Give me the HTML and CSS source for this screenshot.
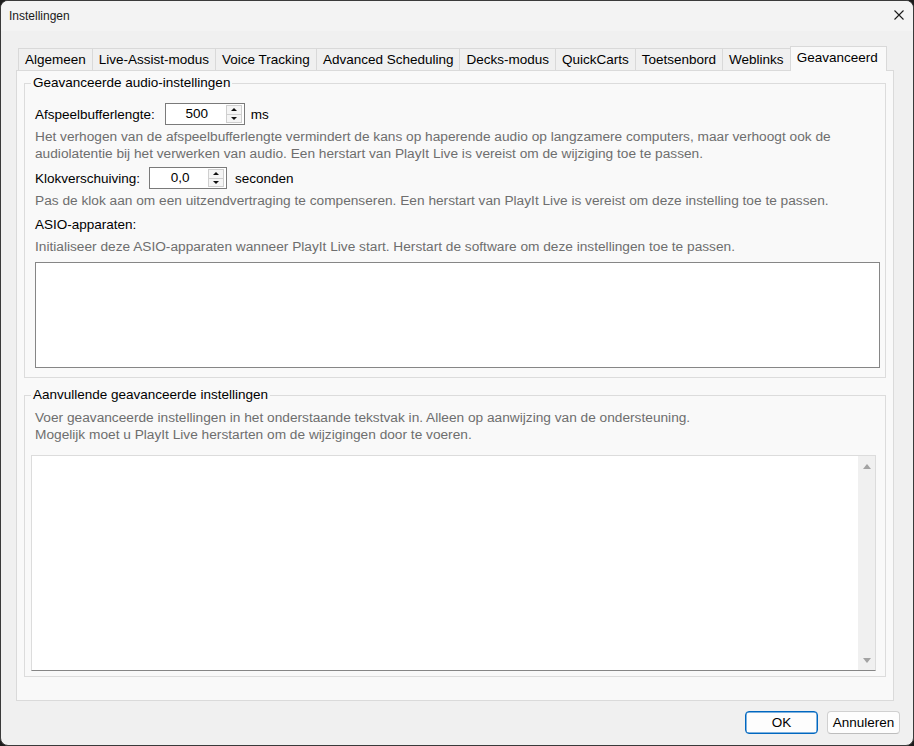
FILE: index.html
```html
<!DOCTYPE html>
<html lang="nl">
<head>
  <meta charset="UTF-8" />
  <title>Instellingen</title>
  <link rel="stylesheet" href="styles.css">
</head>
<body>
  <div class="window">
    <div class="titlebar">
      <span class="title">Instellingen</span>
      <svg class="close" width="10" height="10" viewBox="0 0 10 10">
        <path d="M0.5 0.5L9.5 9.5M9.5 0.5L0.5 9.5" stroke="#1b1b1b" stroke-width="1.1" fill="none"/>
      </svg>
    </div>

    <div class="content">
      <div class="tabs">
        <div class="tab">Algemeen</div>
        <div class="tab">Live-Assist-modus</div>
        <div class="tab">Voice Tracking</div>
        <div class="tab">Advanced Scheduling</div>
        <div class="tab">Decks-modus</div>
        <div class="tab">QuickCarts</div>
        <div class="tab">Toetsenbord</div>
        <div class="tab">Weblinks</div>
        <div class="tab active">Geavanceerd</div>
      </div>

      <div class="page">
        <fieldset class="group group-audio">
          <legend>Geavanceerde audio-instellingen</legend>

          <div class="field-row row-buffer">
            <span class="field-label label-buffer">Afspeelbufferlengte:</span>
            <div class="spin spin-buffer">
              <span class="spin-value">500</span>
              <span class="spin-buttons"><span class="spin-up"></span><span class="spin-down"></span></span>
            </div>
            <span class="unit">ms</span>
          </div>
          <p class="hint hint-buffer">Het verhogen van de afspeelbufferlengte vermindert de kans op haperende audio op langzamere computers, maar verhoogt ook de<br>audiolatentie bij het verwerken van audio. Een herstart van PlayIt Live is vereist om de wijziging toe te passen.</p>

          <div class="field-row row-clock">
            <span class="field-label label-clock">Klokverschuiving:</span>
            <div class="spin spin-clock">
              <span class="spin-value">0,0</span>
              <span class="spin-buttons"><span class="spin-up"></span><span class="spin-down"></span></span>
            </div>
            <span class="unit">seconden</span>
          </div>
          <p class="hint hint-clock">Pas de klok aan om een uitzendvertraging te compenseren. Een herstart van PlayIt Live is vereist om deze instelling toe te passen.</p>

          <p class="field-label label-asio">ASIO-apparaten:</p>
          <p class="hint hint-asio">Initialiseer deze ASIO-apparaten wanneer PlayIt Live start. Herstart de software om deze instellingen toe te passen.</p>
          <div class="listbox"></div>
        </fieldset>

        <fieldset class="group group-extra">
          <legend>Aanvullende geavanceerde instellingen</legend>
          <p class="hint hint-extra">Voer geavanceerde instellingen in het onderstaande tekstvak in. Alleen op aanwijzing van de ondersteuning.<br>Mogelijk moet u PlayIt Live herstarten om de wijzigingen door te voeren.</p>
          <div class="textbox">
            <div class="textbox-area"></div>
            <div class="scrollbar">
              <span class="arrow-up"></span>
              <span class="arrow-down"></span>
            </div>
          </div>
        </fieldset>
      </div>

      <div class="buttons">
        <button class="btn btn-default">OK</button>
        <button class="btn">Annuleren</button>
      </div>
    </div>
  </div>
</body>
</html>
```

FILE: styles.css
```css
html, body {
  margin: 0;
  padding: 0;
  background: #1c1c1c;
}
body {
  font-family: 'Liberation Sans', Arial, sans-serif;
  font-size: 13px;
  color: #000;
}
.window {
  width: 914px;
  height: 746px;
  box-sizing: border-box;
  border: 1px solid #3a3a3a;
  border-radius: 8px;
  background: #f0f0f0;
  overflow: hidden;
  display: flex;
  flex-direction: column;
}
.titlebar {
  height: 30px;
  background: #f3f3f3;
  display: flex;
  align-items: center;
  justify-content: space-between;
  padding: 0 9px 0 8px;
  flex-shrink: 0;
}
.title {
  font-size: 12px;
  color: #1a1a1a;
  margin-top: -1px;
}
.close {
  display: block;
  margin-top: -2px;
}
.content {
  flex: 1;
  display: flex;
  flex-direction: column;
}

/* tabs */
.tabs {
  display: flex;
  align-items: flex-end;
  margin: 15px 0 0 17px;
  height: 24px;
  position: relative;
  z-index: 1;
}
.tab {
  height: 21px;
  line-height: 21px;
  padding: 0 6px;
  border: 1px solid #d9d9d9;
  border-bottom: none;
  margin-left: -1px;
  background: #f0f0f0;
  font-size: 13.5px;
  color: #000;
  white-space: nowrap;
}
.tab:first-child {
  margin-left: 0;
}
.tab.active {
  height: 24px;
  line-height: 21px;
  background: #f9f9f9;
  margin-left: -1px;
  margin-bottom: -1px;
  padding: 0 8px 0 6px;
}

/* tab page */
.page {
  margin: 0 19px 0 15px;
  border: 1px solid #dadada;
  background: #f9f9f9;
  padding: 4px 7px 23px 7px;
}
.group {
  margin: 0;
  border: 1px solid #dcdcdc;
  padding: 12px 5px 9px 10px;
  min-width: 0;
}
.group legend {
  padding: 0 2px;
  margin-left: -4px;
  line-height: 16px;
  font-size: 13.5px;
}
.group-extra {
  margin-top: 9px;
  padding: 6px 5px 5px 10px;
}

.field-row {
  display: flex;
  align-items: center;
  height: 22px;
}
.field-label {
  margin: 0;
  font-size: 13.5px;
}
.label-buffer {
  margin-right: 10px;
}
.label-clock {
  margin-right: 9px;
}
.unit {
  margin-left: 6px;
  font-size: 13.5px;
}
.row-clock .unit {
  margin-left: 8px;
}
.hint {
  margin: 0;
  color: #6e6e6e;
  line-height: 17px;
  font-size: 13.7px;
}
.hint-buffer { margin-top: 3px; }
.row-clock { margin-top: 5px; }
.hint-clock { margin-top: 3px; }
.label-asio {
  margin-top: 7px;
  line-height: 17px;
}
.hint-asio { margin-top: 5px; }

/* spin boxes */
.spin {
  height: 22px;
  box-sizing: border-box;
  border: 1px solid #7a7a7a;
  background: #fff;
  display: flex;
  align-items: stretch;
}
.spin-buffer { width: 80px; }
.spin-clock { width: 78px; }
.spin-value {
  flex: 1;
  text-align: center;
  line-height: 20px;
  font-size: 13.5px;
  padding-left: 2px;
}
.spin-buttons {
  width: 16px;
  margin: 1px 2px 1px 0;
  display: flex;
  flex-direction: column;
}
.spin-up, .spin-down {
  flex: 1;
  border: 1px solid #cfcfcf;
  background: #f5f5f5;
  display: flex;
  align-items: center;
  justify-content: center;
}
.spin-down {
  border-top: none;
}
.spin-up::after {
  content: "";
  border-left: 3px solid transparent;
  border-right: 3px solid transparent;
  border-bottom: 3px solid #111;
}
.spin-down::after {
  content: "";
  border-left: 3px solid transparent;
  border-right: 3px solid transparent;
  border-top: 3px solid #111;
}

/* list and text boxes */
.listbox {
  margin-top: 7px;
  height: 106px;
  box-sizing: border-box;
  border: 1px solid #868686;
  background: #fff;
}
.hint-extra {
  margin-top: 0;
}
.textbox {
  margin: 12px 4px 0 -4px;
  height: 216px;
  box-sizing: border-box;
  border: 1px solid #dcdcdc;
  border-bottom-color: #868686;
  background: #fff;
  display: flex;
}
.textbox-area {
  flex: 1;
}
.scrollbar {
  width: 17px;
  background: #f0f0f0;
  display: flex;
  flex-direction: column;
  justify-content: space-between;
  align-items: center;
  padding: 8px 0 7px;
}
.arrow-up {
  border-left: 4.5px solid transparent;
  border-right: 4.5px solid transparent;
  border-bottom: 5px solid #a3a3a3;
}
.arrow-down {
  border-left: 4.5px solid transparent;
  border-right: 4.5px solid transparent;
  border-top: 5px solid #a3a3a3;
}

/* dialog buttons */
.buttons {
  display: flex;
  justify-content: flex-end;
  gap: 9px;
  padding: 10px 13px 0 0;
}
.btn {
  height: 23px;
  width: 73px;
  border: 1px solid #d0d0d0;
  border-bottom-color: #bdbdbd;
  border-radius: 4px;
  background: #fdfdfd;
  font-family: 'Liberation Sans', Arial, sans-serif;
  font-size: 13.5px;
  color: #000;
  padding: 0;
}
.btn-default {
  border: 1px solid #0067c0;
  box-shadow: inset 0 0 0 0.5px #0067c0;
}
```
